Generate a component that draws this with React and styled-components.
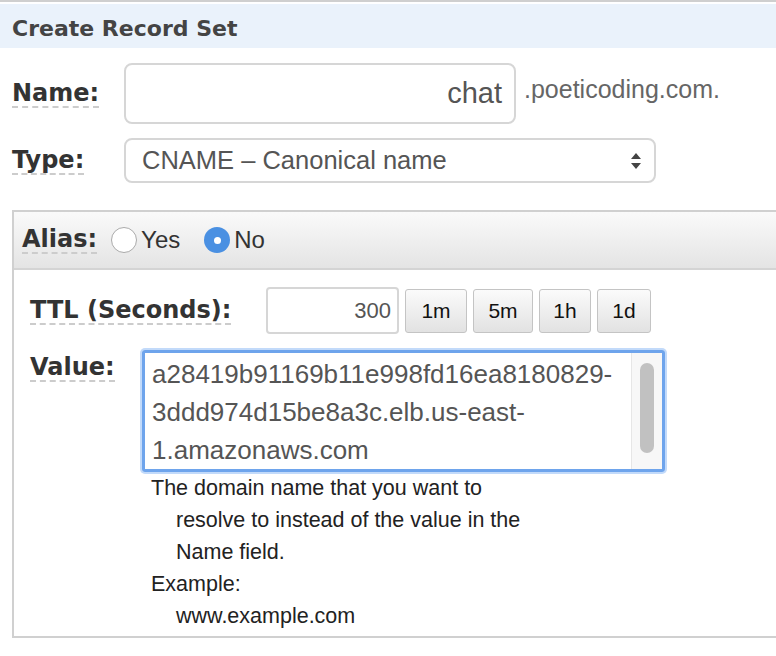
import React from "react";
import styled, { createGlobalStyle } from "styled-components";

const G = createGlobalStyle`
  body { margin: 0; background: #fff; font-family: "Liberation Sans", Arial, sans-serif; }
`;
const Page = styled.div`
  width: 776px; height: 656px; overflow: hidden; border-top: 2px solid #cfcfcf; padding-top: 2px; box-sizing: border-box;
`;
const Header = styled.div`
  background: #eaf2fb; height: 44px; display: flex; align-items: center; padding: 4px 0 0 12px; box-sizing: border-box;
  font-family: "DejaVu Sans", Verdana, sans-serif; font-weight: bold; font-size: 22px; color: #444;
`;
const Row = styled.div`
  display: flex; align-items: center; padding-left: ${p => p.$pl || 12}px; margin-top: ${p => p.$mt || 0}px;
`;
const Label = styled.span`
  display: inline-block;
  font-family: "DejaVu Sans", Verdana, sans-serif; font-weight: bold; font-size: 24px; color: #333;
  border-bottom: 2px dashed #ccc; line-height: 26px;
`;
const LabelWrap = styled.div` width: ${p => p.$w}px; flex: none; align-self: ${p => p.$top ? "flex-start" : "center"}; margin-top: ${p => p.$top ? 4 : 0}px;`;
const Input = styled.div`
  box-sizing: border-box; width: ${p => p.$w}px; height: ${p => p.$h}px; border: 2px solid #d6d6d6; border-radius: ${p => p.$r || 8}px;
  display: flex; align-items: center; justify-content: ${p => p.$right ? "flex-end" : "flex-start"};
  padding: 0 ${p => p.$pr || 12}px 0 16px; font-size: ${p => p.$fs}px; color: #555; background: #fff;
`;
const Suffix = styled.span` font-size: 25px; color: #666; margin-left: 8px; margin-top: -8px;`;
const Arrows = styled.svg` margin-left: auto; `;
const Panel = styled.div`
  margin: 27px 0 0 12px; border: 2px solid #d0d0d0; border-right: none; height: 428px; box-sizing: border-box;
`;
const AliasBar = styled.div`
  height: 56px; background: linear-gradient(#fafafa, #e4e4e4); border-bottom: 2px solid #d4d4d4;
  display: flex; align-items: center; padding-left: 8px; font-size: 24px; color: #333;
`;
const Radio = styled.span`
  width: 26px; height: 26px; border-radius: 50%; box-sizing: border-box; display: inline-flex; align-items: center; justify-content: center;
  border: ${p => p.$on ? "none" : "1px solid #aaa"}; background: ${p => p.$on ? "#4a90e2" : "#fff"}; margin: 0 4px 0 ${p => p.$ml}px;
  &::after { content: ""; width: 7px; height: 7px; border-radius: 50%; background: #fff; display: ${p => p.$on ? "block" : "none"}; }
`;
const Btn = styled.div`
  box-sizing: border-box; height: 44px; width: ${p => p.$w}px; margin-left: 6px; border: 1px solid #c4c4c4; border-radius: 3px;
  background: linear-gradient(#fbfbfb, #e2e2e2); display: flex; align-items: center; justify-content: center; font-size: 21px; color: #111;
`;
const TextArea = styled.div`
  box-sizing: border-box; width: 523px; height: 122px; border: 3px solid #6ea4ec; box-shadow: 0 0 0 2px #c2dafa; border-radius: 3px;
  display: flex; font-size: 26px; color: #555; line-height: 38px; margin-left: -4px;
`;
const TAText = styled.div` flex: 1; padding: 2px 0 0 7px; white-space: nowrap; `;
const Scroll = styled.div`
  width: 30px; flex: none; border-left: 1px solid #e6e6e6; background: #f7f7f7; display: flex; justify-content: center; padding-top: 10px;
  &::before { content: ""; width: 14px; height: 90px; border-radius: 7px; background: #c1c1c1; }
`;
const Help = styled.div` padding-left: 137px; font-size: 21.5px; color: #222; line-height: 32px; margin-top: 0px;`;
const Ind = styled.div` padding-left: 25px; `;

export default function App() {
  return (
    <Page>
      <G />
      <Header>Create Record Set</Header>
      <Row $mt={15}>
        <LabelWrap $w={112}><Label>Name:</Label></LabelWrap>
        <Input $w={392} $h={61} $fs={29} $right>chat</Input>
        <Suffix>.poeticoding.com.</Suffix>
      </Row>
      <Row $mt={14}>
        <LabelWrap $w={112}><Label>Type:</Label></LabelWrap>
        <Input $w={532} $h={45} $fs={25.5}>CNAME – Canonical name
          <Arrows width="12" height="20" viewBox="0 0 12 20"><path d="M1 8l5-6 5 6z M1 12l5 6 5-6z" fill="#444" /></Arrows>
        </Input>
      </Row>
      <Panel>
        <AliasBar>
          <Label>Alias:</Label>
          <Radio $ml={14} />Yes
          <Radio $ml={24} $on />No
        </AliasBar>
        <Row $pl={16} $mt={17}>
          <LabelWrap $w={236}><Label>TTL (Seconds):</Label></LabelWrap>
          <Input $w={133} $h={47} $fs={22} $r={4} $right $pr={6}>300</Input>
          <Btn $w={62}>1m</Btn><Btn $w={60}>5m</Btn><Btn $w={52}>1h</Btn><Btn $w={54}>1d</Btn>
        </Row>
        <Row $pl={16} $mt={16}>
          <LabelWrap $w={116} $top><Label>Value:</Label></LabelWrap>
          <TextArea>
            <TAText>a28419b91169b11e998fd16ea8180829-<br />3ddd974d15be8a3c.elb.us-east-<br />1.amazonaws.com</TAText>
            <Scroll />
          </TextArea>
        </Row>
        <Help>
          The domain name that you want to
          <Ind>resolve to instead of the value in the</Ind>
          <Ind>Name field.</Ind>
          Example:
          <Ind>www.example.com</Ind>
        </Help>
      </Panel>
    </Page>
  );
}
